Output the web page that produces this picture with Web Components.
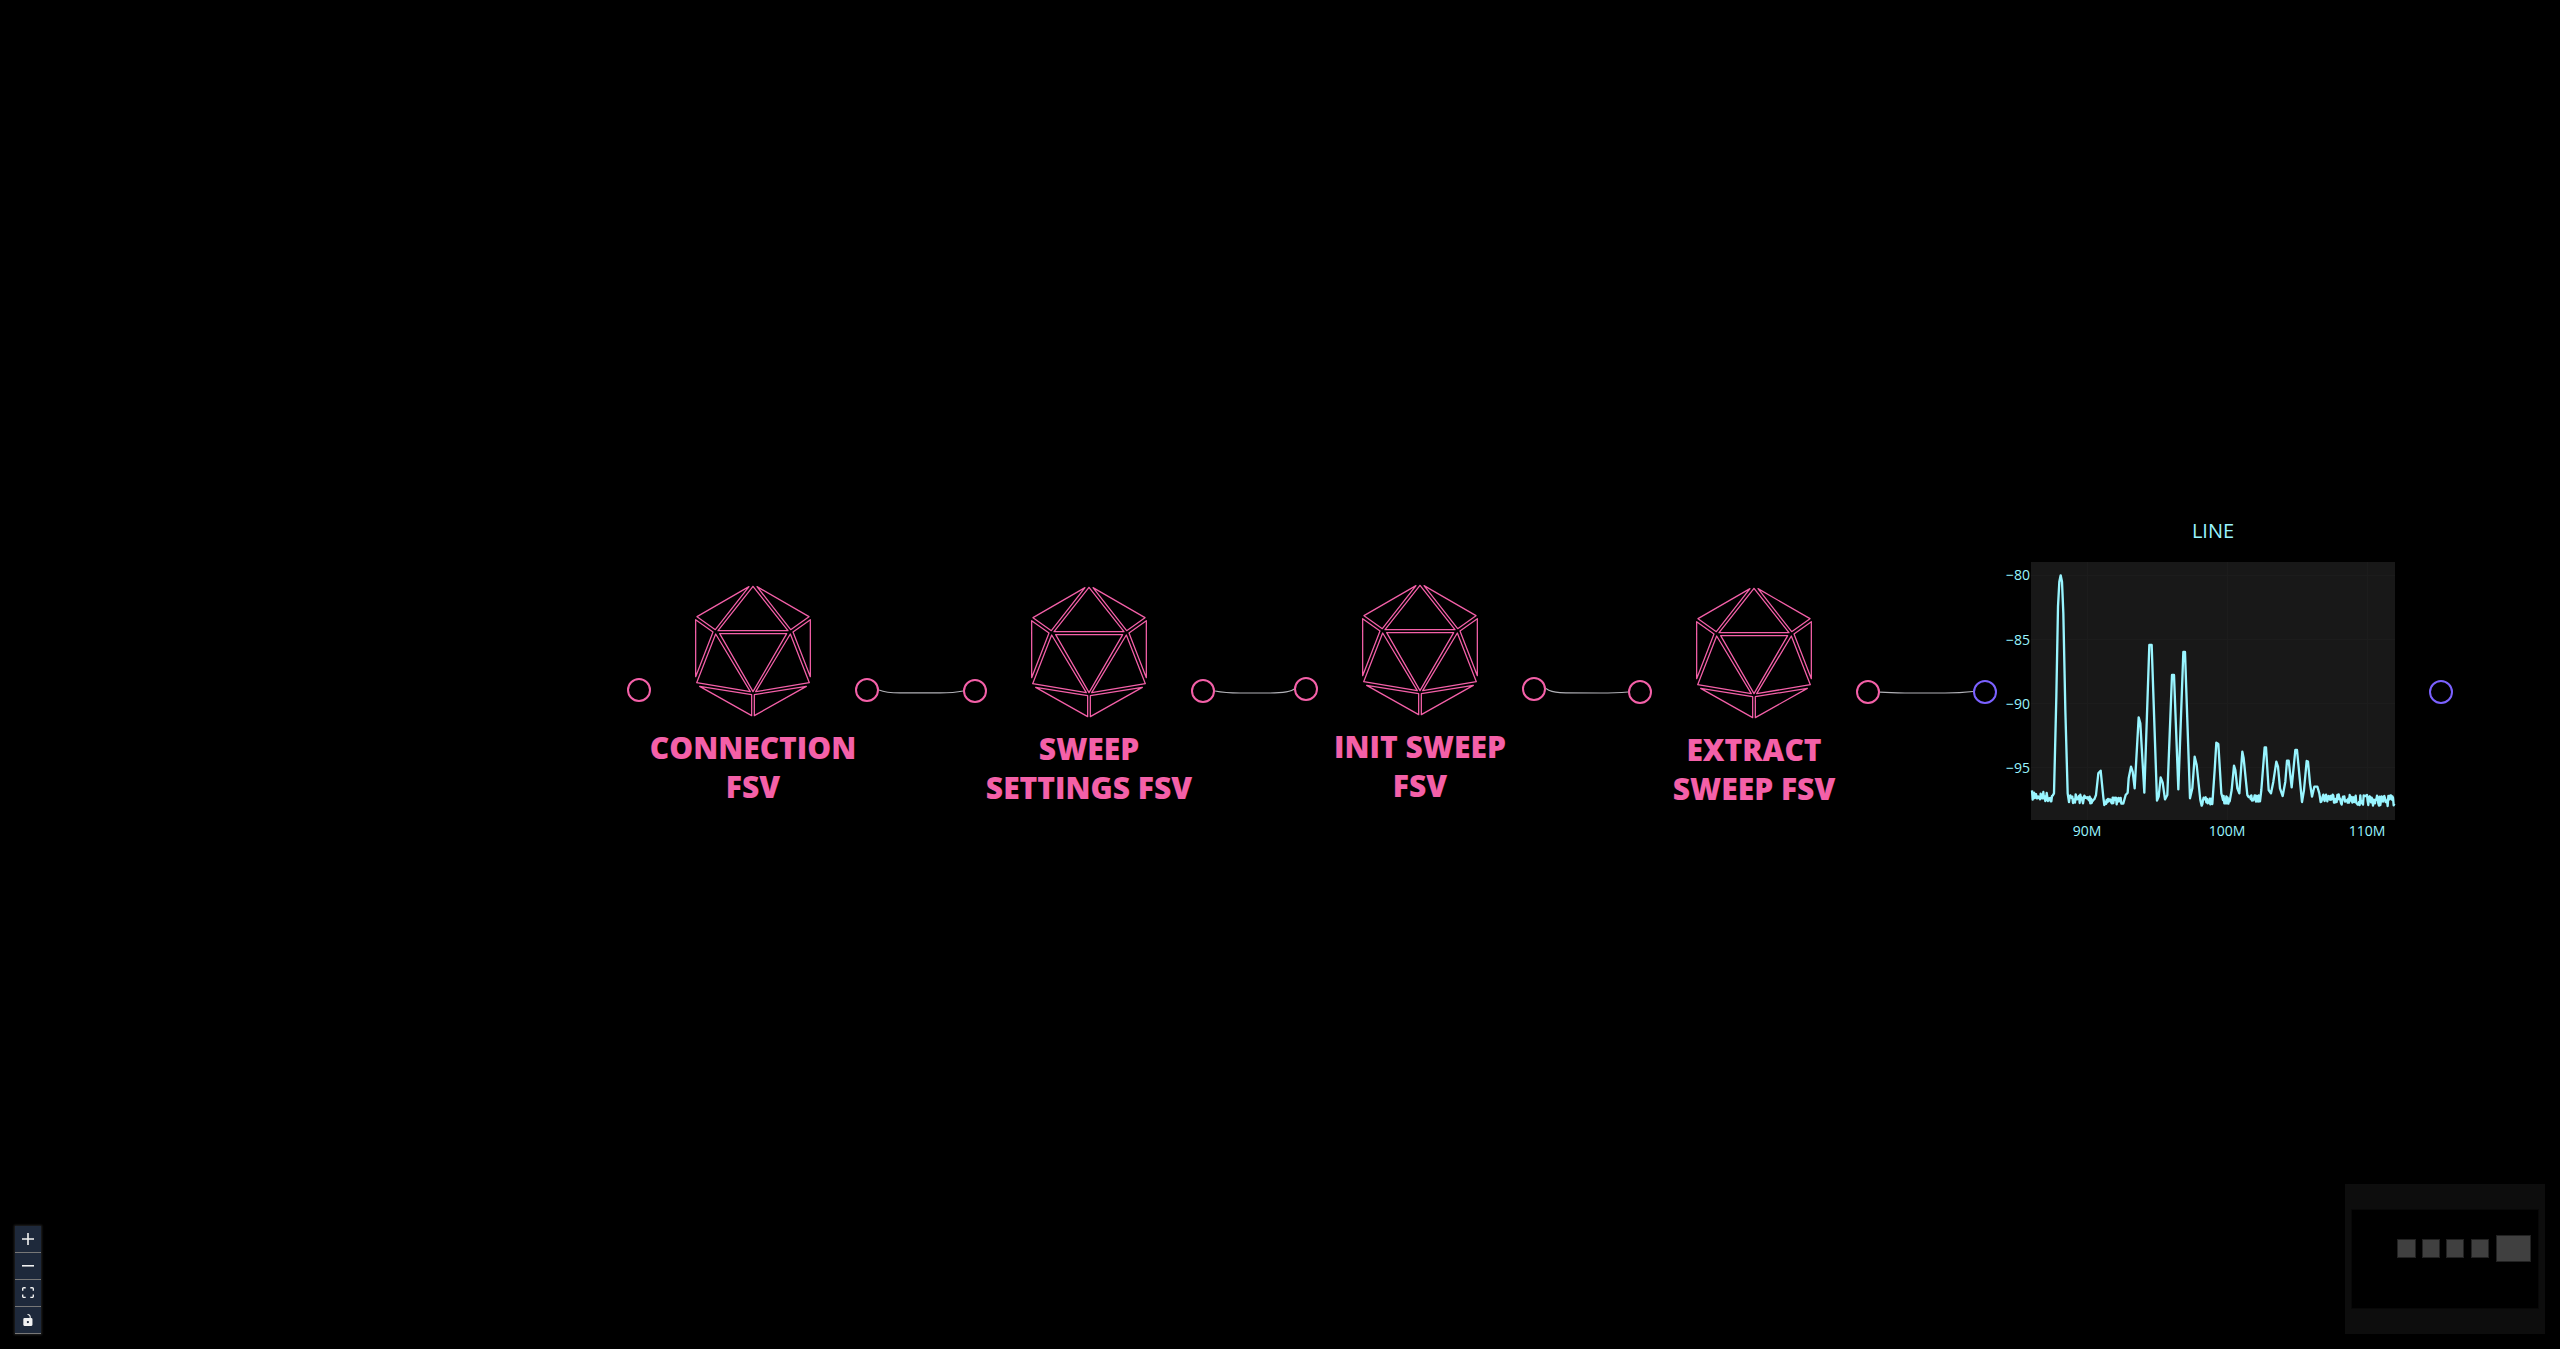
<!DOCTYPE html>
<html lang="en">
<head>
<meta charset="utf-8">
<title>Flow</title>
<style>
  html, body { margin: 0; height: 100%; background: #000; }
  body { font-family: "Open Sans", "Noto Sans", sans-serif; }
</style>
</head>
<body>
<flow-canvas>
  <flow-edges></flow-edges>
  <visa-node style="--x:639px;--y:576px">CONNECTION FSV</visa-node>
  <visa-node style="--x:975px;--y:577px">SWEEP SETTINGS FSV</visa-node>
  <visa-node style="--x:1306px;--y:575px">INIT SWEEP FSV</visa-node>
  <visa-node style="--x:1640px;--y:578px">EXTRACT SWEEP FSV</visa-node>
  <line-node style="--x:1985px;--y:517px">LINE</line-node>
  <flow-controls slot="controls"></flow-controls>
  <flow-minimap slot="minimap"></flow-minimap>
</flow-canvas>

<script>
const define = (name, html, setup) => customElements.define(name, class extends HTMLElement {
  connectedCallback() {
    if (this.shadowRoot) return;
    const root = this.attachShadow({ mode: 'open' });
    root.innerHTML = html;
    if (setup) setup(root);
  }
});

define('flow-canvas', `
<style>
  :host { display: block; position: relative; height: 100vh; overflow: hidden; background: #000; }
  .controls { position: absolute; left: 15px; bottom: 15px; }
  .minimap { position: absolute; right: 15px; bottom: 15px; }
</style>
<slot></slot>
<div class="controls"><slot name="controls"></slot></div>
<div class="minimap"><slot name="minimap"></slot></div>`);

/* Connections between node handles */
define('flow-edges', `
<style>
  :host { position: absolute; inset: 0; display: block; }
  svg { display: block; width: 100%; height: 100%; }
  path { fill: none; stroke: #b1b1b7; stroke-width: 1.2; }
</style>
<svg aria-hidden="true">
  <path d="M879 690Q886 692.9 900 692.9H940Q954 692.9 963 691"/>
  <path d="M1215 691Q1225 693 1240 693H1270Q1290 693 1295 688.5"/>
  <path d="M1546 688.5Q1551 692.3 1560 692.6T1600 693Q1616 693 1628 692"/>
  <path d="M1880 692.2Q1890 693 1905 693H1945Q1960 693 1973 691.5"/>
</svg>`);

/* Connection point */
define('flow-handle', `
<style>
  :host { display: block; box-sizing: border-box; width: 24px; height: 24px; border: 2px solid; border-radius: 50%; background: #000; }
</style>`);

define('icosahedron-icon', `
<style>
  :host { display: block; width: 120px; height: 132px; }
  svg { display: block; width: 100%; height: 100%; }
  path { fill: none; stroke: currentColor; stroke-width: 3.8; stroke-linejoin: round; }
</style>
<svg viewBox="251 75 360 396" aria-hidden="true">
  <path d="M431 79L326 212H536Z"/>
  <path d="M419 80L263 170L318 209Z"/>
  <path d="M443 80L599 170L544 209Z"/>
  <path d="M259 179V350L311 216Z"/>
  <path d="M603 179V350L551 216Z"/>
  <path d="M319 222L262 368L423 395Z"/>
  <path d="M543 222L600 368L439 395Z"/>
  <path d="M331 221H532L431 395Z"/>
  <path d="M271 379L427 404V467Z"/>
  <path d="M591 379L435 404V467Z"/>
</svg>`);

define('visa-node', `
<style>
  :host { position: absolute; left: var(--x); top: var(--y); display: flex; flex-direction: column; align-items: center; box-sizing: border-box; width: 228px; height: 228px; padding-top: 9px; gap: 11px; color: #f460a8; }
  h2 { margin: 0; font-size: 30px; line-height: 39px; font-weight: 800; text-align: center; }
  flow-handle { position: absolute; top: 102px; }
  .in { left: -12px; }
  .out { right: -12px; }
</style>
<icosahedron-icon></icosahedron-icon>
<h2><slot></slot></h2>
<flow-handle class="in"></flow-handle>
<flow-handle class="out"></flow-handle>`);

define('line-node', `
<style>
  :host { position: absolute; left: var(--x); top: var(--y); display: block; width: 456px; height: 350px; color: #99f5ff; }
  h2 { margin: 0; font-size: 20px; line-height: 27px; font-weight: 500; text-align: center; }
  svg { display: block; width: 100%; height: 323px; }
  text { fill: currentColor; font-size: 14px; font-weight: 500; }
  .y { text-anchor: end; }
  .x { text-anchor: middle; }
  .grid { stroke: #1c1c1c; fill: none; }
  .trace { fill: none; stroke: currentColor; stroke-width: 7; stroke-linejoin: round; }
  flow-handle { position: absolute; top: 163px; color: #7b61ff; }
  .in { left: -12px; }
  .out { right: -12px; }
</style>
<h2><slot></slot></h2>
<svg viewBox="0 27 456 323" role="img" aria-label="Sweep spectrum">
  <rect x="46" y="45" width="364" height="258" fill="#181818"/>
  <path class="grid" d="M46 58.5H410M46 122.5H410M46 186.5H410M46 250.5H410M102.500 45V303M242.500 45V303M382.500 45V303"/>
  <path class="trace" transform="translate(-25 -7) scale(.3333333)"/>
  <text class="y" x="45" y="63">−80</text>
  <text class="y" x="45" y="128">−85</text>
  <text class="y" x="45" y="192">−90</text>
  <text class="y" x="45" y="256">−95</text>
  <text class="x" x="102" y="319">90M</text>
  <text class="x" x="242" y="319">100M</text>
  <text class="x" x="382" y="319">110M</text>
</svg>
<flow-handle class="in"></flow-handle>
<flow-handle class="out"></flow-handle>`, root => {
  // The trace alternates noise-floor runs [x0, x1, base0, base1, amplitude] and peaks [x, y].
  let seed = 7;
  const rnd = () => (seed = (seed * 16807) % 2147483647) / 2147483647 * 2 - 1;
  const data = [
    [216,278,856,862,15],[282,850],[289,560],[294,290],[298,215],[302,196],[306,215],[310,310],[316,600],[323,850],
    [327,403,866,868,15],[408,855],[415,790],[422,782],[430,862],[433,885],
    [436,490,872,872,11],[497,855],[503,848],[506,805],[513,770],[518,785],[524,835],[536,622],[541,640],[553,848],
    [568,405],[575,405],[591,872],[596,860],[602,802],[608,818],[615,868],[622,855],[636,495],[642,495],[655,838],
    [670,426],[675,426],[690,865],[697,835],[704,740],[710,765],[721,870],
    [725,758,876,872,13],[764,780],[769,698],[775,702],[784,850],
    [787,810,870,870,12],[815,840],[822,767],[826,780],[832,835],[838,850],[847,725],[851,745],[862,855],
    [866,900,866,866,11],[904,840],[914,712],[918,712],[926,840],[933,850],[940,815],[949,755],[954,770],[960,835],
    [968,858],[976,815],[981,752],[986,752],[995,832],[1006,720],[1011,720],[1026,876],[1032,840],[1040,753],
    [1044,755],[1050,820],[1056,860],[1063,830],[1072,830],[1078,850],
    [1082,1140,861,864,15],[1143,1304,870,872,16]
  ];
  const pts = [];
  for (const d of data) {
    if (d.length === 2) { pts.push(d); continue; }
    const [a, b, y0, y1, amp] = d;
    for (let x = a; x <= b; x += 2) pts.push([x, Math.round(y0 + (y1 - y0) * (x - a) / (b - a) + rnd() * amp)]);
  }
  root.querySelector('.trace').setAttribute('d', 'M' + pts.map(p => p.join(' ')).join('L'));
});

define('flow-controls', `
<style>
  :host { display: flex; flex-direction: column; width: 26px; box-shadow: 0 0 2px 1px #222; }
  button { display: flex; align-items: center; justify-content: center; box-sizing: border-box; height: 27px; padding: 0; border: 0; border-bottom: 1px solid #777; background: #1e293b; color: #f2f2f2; }
  svg { width: 12px; max-height: 12px; fill: currentColor; }
</style>
<button type="button" aria-label="Zoom in"><svg viewBox="0 0 32 32"><path d="M32 18.133H18.133V32h-4.266V18.133H0v-4.266h13.867V0h4.266v13.867H32z"/></svg></button>
<button type="button" aria-label="Zoom out"><svg viewBox="0 0 32 5"><path d="M0 0h32v4.2H0z"/></svg></button>
<button type="button" aria-label="Fit view"><svg viewBox="0 0 32 30"><path d="M3.692 4.63c0-.53.4-.938.939-.938h5.215V0H4.708C2.13 0 0 2.054 0 4.63v5.216h3.692V4.631zM27.354 0h-5.2v3.692h5.17c.53 0 .984.4.984.939v5.215H32V4.631A4.624 4.624 0 0027.354 0zm.954 24.83c0 .532-.4.94-.939.94h-5.215v3.768h5.215c2.577 0 4.631-2.13 4.631-4.707v-5.139h-3.692v5.139zm-23.677.94c-.531 0-.939-.4-.939-.94v-5.138H0v5.139c0 2.577 2.13 4.707 4.708 4.707h5.138V25.77H4.631z"/></svg></button>
<button type="button" aria-label="Toggle interactivity"><svg viewBox="0 0 25 32"><path d="M21.333 10.667H19.81V7.619C19.81 3.429 16.38 0 12.19 0c-4.114 1.828-1.37 2.133.305 2.438 1.676.305 4.42 2.59 4.42 5.181v3.048H3.047A3.056 3.056 0 000 13.714v15.238A3.056 3.056 0 003.048 32h18.285a3.056 3.056 0 003.048-3.048V13.714a3.056 3.056 0 00-3.048-3.047zM12.19 24.533a3.056 3.056 0 01-3.047-3.047 3.056 3.056 0 013.047-3.048 3.056 3.056 0 013.048 3.048 3.056 3.056 0 01-3.048 3.047z"/></svg></button>`);

define('flow-minimap', `
<style>
  :host { display: block; width: 200px; height: 150px; }
  svg { display: block; width: 100%; height: 100%; }
  .node { fill: #404040; stroke: #222; }
</style>
<svg viewBox="0 0 200 150" role="img" aria-label="Mini map">
  <rect width="200" height="150" fill="#0d0d0d"/>
  <rect x="6.500" y="25.500" width="187" height="99" fill="#000" stroke="#080808"/>
  <rect class="node" x="52.500" y="55.500" width="18" height="18"/>
  <rect class="node" x="77.500" y="55.500" width="17" height="18"/>
  <rect class="node" x="101.500" y="55.500" width="17" height="18"/>
  <rect class="node" x="126.500" y="55.500" width="17" height="18"/>
  <rect class="node" x="151.500" y="51.500" width="34" height="26"/>
</svg>`);
</script>
</body>
</html>
